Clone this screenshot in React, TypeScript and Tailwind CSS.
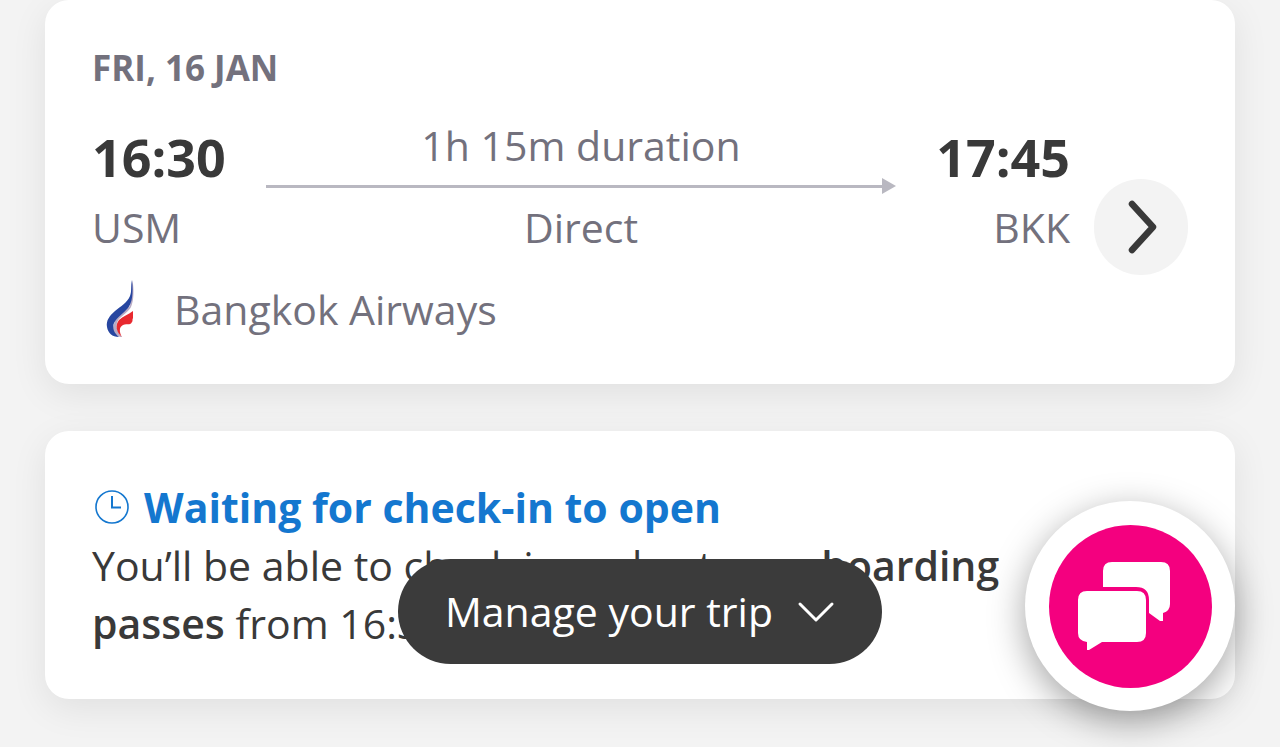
import React from 'react';

const cardClass = 'rounded-3xl bg-white shadow-[0_10px_36px_rgba(0,0,0,0.08)]';

function FlightArrow() {
  return (
    <div className="flex h-6 items-center" aria-hidden="true">
      <div className="h-[3px] flex-1 bg-[#b9b8c1]" />
      <svg width="14" height="16" viewBox="0 0 14 16">
        <path d="M0 0L14 8L0 16Z" fill="#b9b8c1" />
      </svg>
    </div>
  );
}

function AirlineLogo() {
  return (
    <svg width="58" height="58" viewBox="0 0 58 58" aria-hidden="true">
      <path
        d="M40.500 0C42 10 42 20 39 27C37 31 31 35 27 39C23 44 24 51 30 57C26 57 22 55 20 50L24 38L38 26Z"
        fill="#b9abc4"
      />
      <path
        d="M40 0C38.500 6 40 11 38 16C35 23 29 26 23 31C17 36 14 41 15 47C16 53 20 57 27 57C22 53 20 48 22 43C25 37 31 34 36 28C40 23 41.500 14 40 0Z"
        fill="#2746a0"
      />
      <path
        d="M41 31C36 35 31 36 27 40C23 45 24 52 30 57C27 52 27 47 31 45C34 43 38 46 40 42C41 41 40 40 41 38Z"
        fill="#e8292f"
      />
    </svg>
  );
}

function FlightCard() {
  return (
    <section className={`${cardClass} px-[47px] pt-11 pb-[46px]`}>
      <h2 className="mb-6 text-[35px] leading-[48px] font-bold text-[#73717d]">FRI, 16 JAN</h2>
      <div className="flex items-center gap-6">
        <div className="min-w-0 flex-1">
          <div className="mb-6 flex gap-10">
            <div>
              <p className="text-[52px] leading-[82px] font-bold text-[#393939]">16:30</p>
              <p className="leading-[58px]">USM</p>
            </div>
            <div className="flex-1 text-center">
              <p className="leading-[58px]">1h 15m duration</p>
              <FlightArrow />
              <p className="leading-[58px]">Direct</p>
            </div>
            <div className="text-right">
              <p className="text-[52px] leading-[82px] font-bold text-[#393939]">17:45</p>
              <p className="leading-[58px]">BKK</p>
            </div>
          </div>
          <div className="flex items-center gap-6">
            <AirlineLogo />
            <p className="leading-[58px]">Bangkok Airways</p>
          </div>
        </div>
        <button
          type="button"
          aria-label="View flight details"
          className="flex h-24 w-[94px] items-center justify-center rounded-full bg-[#f3f3f3]"
        >
          <svg width="32" height="56" viewBox="0 0 32 56" fill="none">
            <path
              d="M7 5L28 28L7 51"
              stroke="#393939"
              strokeWidth="6.500"
              strokeLinecap="round"
              strokeLinejoin="round"
            />
          </svg>
        </button>
      </div>
    </section>
  );
}

function CheckInCard() {
  return (
    <section className={`${cardClass} p-[47px] text-[#393939]`}>
      <h2 className="flex items-center gap-3 leading-[58px] font-bold text-[#1477cf]">
        <svg width="40" height="40" viewBox="0 0 40 40" fill="none" stroke="currentColor" aria-hidden="true">
          <circle cx="20" cy="20" r="16" strokeWidth="1.600" />
          <path d="M20 9V20.500H29" strokeWidth="2" />
        </svg>
        Waiting for check-in to open
      </h2>
      <p className="max-w-[940px] leading-[58px]">
        You’ll be able to check in and get your <strong className="font-semibold">boarding passes</strong> from 16:30
      </p>
    </section>
  );
}

function ManageTripButton() {
  return (
    <button
      type="button"
      className="fixed bottom-[83px] left-1/2 flex h-[105px] w-[484px] -translate-x-1/2 items-center justify-center gap-6 rounded-full bg-[#3b3b3b] text-white"
    >
      Manage your trip
      <svg width="38" height="24" viewBox="0 0 38 24" fill="none" aria-hidden="true">
        <path d="M3 4L19 20L35 4" stroke="white" strokeWidth="3" strokeLinecap="round" strokeLinejoin="round" />
      </svg>
    </button>
  );
}

function ChatButton() {
  return (
    <button
      type="button"
      aria-label="Open chat"
      className="fixed right-[45px] bottom-9 flex size-[210px] items-center justify-center rounded-full bg-white shadow-[0_10px_36px_rgba(0,0,0,0.36)]"
    >
      <span className="flex size-[163px] items-center justify-center rounded-full bg-[#f4007f]">
        <svg width="163" height="163" viewBox="0 0 163 163" fill="white">
          <path d="M54 62V46Q54 37 63 37H112Q121 37 121 46V79Q121 86 114 88V96H111L100 88V75Q100 62 87 62Z" />
          <path d="M38 66H88Q97 66 97 75V108Q97 117 88 117H53L40 125H38V117Q29 116 29 108V75Q29 66 38 66Z" />
        </svg>
      </span>
    </button>
  );
}

export default function App() {
  return (
    <div className="min-h-screen bg-[#f3f3f3] font-['Open_Sans','Noto_Sans',sans-serif] text-[41px] text-[#73717d]">
      <main className="flex flex-col gap-[47px] px-[45px] pb-12">
        <FlightCard />
        <CheckInCard />
      </main>
      <ManageTripButton />
      <ChatButton />
    </div>
  );
}
